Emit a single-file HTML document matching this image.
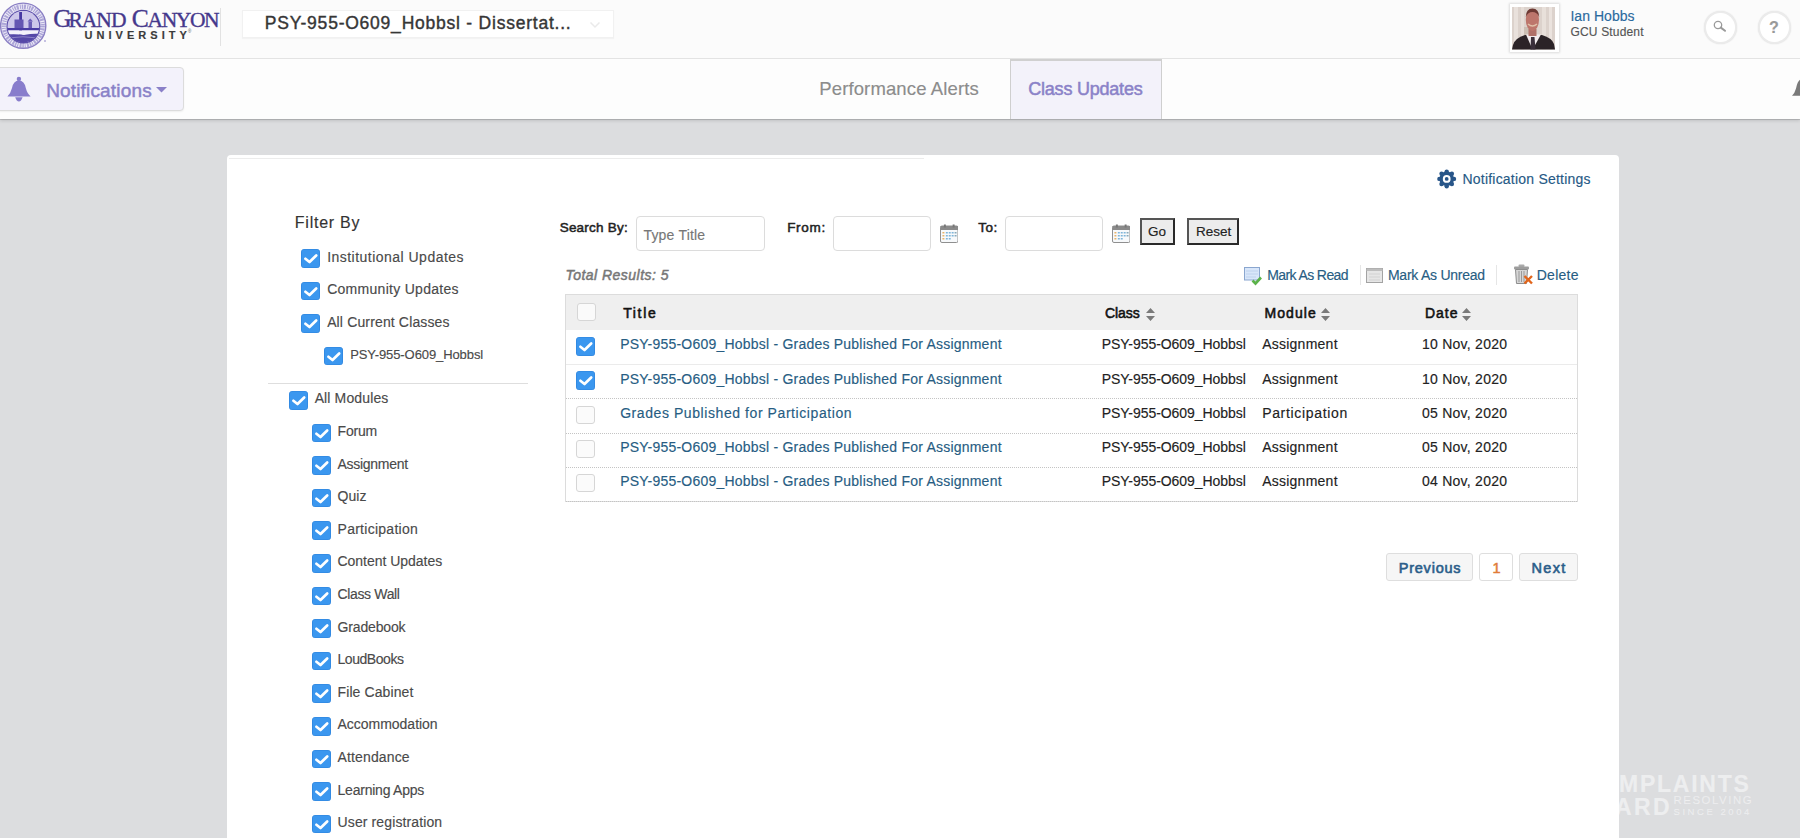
<!DOCTYPE html>
<html><head><meta charset="utf-8">
<style>
html,body{margin:0;padding:0;}
body{width:1800px;height:838px;overflow:hidden;position:relative;background:#dcdddf;font-family:"Liberation Sans",sans-serif;}
.a{position:absolute;box-sizing:border-box;}
.t{position:absolute;white-space:pre;font-family:"Liberation Sans",sans-serif;-webkit-text-stroke:0.15px currentColor;}
.cb{position:absolute;box-sizing:border-box;width:19px;height:18.7px;border-radius:3.5px;background:#3b97ef;box-shadow:inset 0 0 0 0.6px rgba(30,110,200,0.5);}
.cb svg{position:absolute;left:0;top:0;}
.ucb{position:absolute;box-sizing:border-box;width:19px;height:18px;border-radius:3px;background:#fbfbfb;border:1px solid #d6d6d6;}
.dot{position:absolute;left:566px;width:1011px;height:0;border-top:1px dotted #c4c4c4;}
.sort{position:absolute;width:9px;height:13px;}
</style></head><body>
<!-- HEADER -->
<div class="a" style="left:0;top:0;width:1800px;height:59px;background:#fbfbfb;border-bottom:1px solid #e4e4e4;"></div>
<!-- seal -->
<svg class="a" style="left:0;top:0" width="48" height="52" viewBox="0 0 48 52">
  <defs><clipPath id="ic"><circle cx="23.4" cy="26.6" r="15.8"/></clipPath></defs>
  <circle cx="23.2" cy="25.7" r="22.6" fill="#eeecf8" stroke="#8a7fc4" stroke-width="1.4"/>
  <circle cx="23.3" cy="26" r="19.3" fill="none" stroke="#8176c2" stroke-width="4.6" stroke-dasharray="1.5 0.8 2 1.2 1 0.9" opacity="0.6"/>
  <circle cx="23.4" cy="26.6" r="16.2" fill="#d8d3ef" stroke="#5d50ab" stroke-width="1.5"/>
  <g clip-path="url(#ic)">
    <rect x="5" y="11" width="40" height="17" fill="#cdc7ea"/>
    <rect x="19.2" y="12" width="2.8" height="23" fill="#4738a2"/>
    <rect x="14.5" y="19.5" width="9" height="9" fill="#6456b2"/>
    <rect x="28.5" y="21.5" width="3.5" height="7" fill="#6a5db6"/>
    <path d="M27.5 21.5 L33 21.5 L30.2 18.5Z" fill="#6a5db6"/>
    <rect x="5" y="28" width="40" height="2.4" fill="#4a3ca4"/>
    <path d="M5 30.4 H45 V34.5 Q35 33 24 35 Q14 33.5 5 34.8Z" fill="#f3f1fb"/>
    <path d="M5 34.8 Q14 33.5 24 35 Q35 33 45 34.5 V45 H5Z" fill="#5548a8"/>
    <path d="M8 38 Q23 35.5 38 38" stroke="#8d82c8" stroke-width="1" fill="none"/>
  </g>
  <circle cx="45" cy="41" r="0.7" fill="#6a5db6"/>
</svg>
<span class="t" style="left:53.3px;top:5.5px;font-family:'Liberation Serif';font-size:25.5px;line-height:25.5px;color:#45388c;-webkit-text-stroke:0.35px currentColor;">G</span>
<span class="t" style="left:68.5px;top:9.6px;font-family:'Liberation Serif';font-size:21.5px;line-height:21.5px;color:#45388c;-webkit-text-stroke:0.35px currentColor;letter-spacing:-1.0px;">RAND</span>
<span class="t" style="left:131.8px;top:5.5px;font-family:'Liberation Serif';font-size:25.5px;line-height:25.5px;color:#45388c;-webkit-text-stroke:0.35px currentColor;">C</span>
<span class="t" style="left:147.5px;top:9.6px;font-family:'Liberation Serif';font-size:21.5px;line-height:21.5px;color:#45388c;-webkit-text-stroke:0.35px currentColor;letter-spacing:-1.4px;">ANYON</span>
<span class="t" style="left:84.5px;top:30.2px;font-size:11px;line-height:11px;font-weight:bold;color:#3b3b3b;letter-spacing:4.05px;">UNIVERSITY</span>
<span class="t" style="left:188px;top:29.5px;font-size:4.5px;line-height:4.5px;color:#555;-webkit-text-stroke:0;">&#174;</span>
<div class="a" style="left:220px;top:8px;width:1px;height:38px;background:#e2e2e2;"></div>
<!-- dropdown -->
<div class="a" style="left:242px;top:10px;width:372px;height:28px;background:#fff;border:1px solid #f1f1f1;box-shadow:0 1px 1px rgba(0,0,0,0.03);"></div>
<svg class="a" style="left:589px;top:21px" width="12" height="8"><path d="M1.5 1.5 L6 6 L10.5 1.5" fill="none" stroke="#eaeaea" stroke-width="1.5"/></svg>
<!-- photo -->
<div class="a" style="left:1509.5px;top:4px;width:49px;height:48px;background:#fff;box-shadow:0 0 2px 1px rgba(0,0,0,0.12);"></div>
<svg class="a" style="left:1512px;top:7.3px" width="43" height="42.5" viewBox="0 0 43 42.5">
  <rect width="43" height="42.5" fill="#dcd2cc"/>
  <rect x="2" width="4" height="42.5" fill="#e9e1dc"/><rect x="9" width="3" height="42.5" fill="#e6ddd7"/>
  <rect x="30" width="4" height="42.5" fill="#e8e0da"/><rect x="37" width="3" height="42.5" fill="#ebe3de"/>
  <rect x="12" y="20" width="6" height="14" fill="#cbbfb4"/>
  <path d="M0 42.5 L1 38 Q3 31 13 28 L30 28 Q40 31 42 37 L43 42.5 Z" fill="#2b2327"/>
  <path d="M14 27.5 L20.5 42.5 L29 27.5 Z" fill="#f2ecee"/>
  <path d="M19 30 L22.5 30 L23.5 42.5 L18.5 42.5 Z" fill="#3a2f3a"/>
  <rect x="16.5" y="22" width="8" height="7" fill="#b07068"/>
  <ellipse cx="20.4" cy="13" rx="6.6" ry="11" fill="#bd766c"/>
  <path d="M13.8 10 Q14 1.5 20.4 1.5 Q27 1.5 27.2 10 Q25 5 20.4 5 Q16 5 13.8 10Z" fill="#6e3a34"/>
  <path d="M16 17 Q20.4 21 25 17" stroke="#e0c0a8" stroke-width="1.4" fill="none"/>
</svg>
<!-- search / help -->
<div class="a" style="left:1703.5px;top:10.5px;width:33px;height:33px;border-radius:50%;border:2px solid #ebebeb;background:#fff;box-shadow:0 0 1.5px rgba(0,0,0,0.12);"></div>
<svg class="a" style="left:1712px;top:19px" width="16" height="15"><circle cx="6" cy="6" r="3.7" fill="none" stroke="#9a9a9a" stroke-width="1.3"/><path d="M8.8 8.6 L13 11.8" stroke="#9a9a9a" stroke-width="2" stroke-linecap="round"/></svg>
<div class="a" style="left:1758px;top:10.5px;width:33px;height:33px;border-radius:50%;border:2px solid #ebebeb;background:#fff;box-shadow:0 0 1.5px rgba(0,0,0,0.12);"></div>
<span class="t" style="left:1769px;top:20px;font-size:16px;line-height:16px;color:#999;font-weight:bold;">?</span>

<!-- NAV BAR -->
<div class="a" style="left:0;top:59px;width:1800px;height:60px;background:#fdfdfd;box-shadow:0 1px 0 rgba(0,0,0,0.13),0 2px 3px rgba(0,0,0,0.12);"></div>
<div class="a" style="left:-4px;top:67px;width:187.5px;height:43.5px;background:#f3f2fb;border:1px solid #dcdcdc;border-radius:4px;box-shadow:0 1px 2px rgba(0,0,0,0.06);"></div>
<svg class="a" style="left:7px;top:75.5px" width="24" height="26" viewBox="0 0 24 26">
  <circle cx="11.9" cy="2.9" r="2.2" fill="#887dcc"/>
  <path d="M0.4 20.4 Q3.6 17.6 5 12 Q6.4 4.9 11.9 4.6 Q17.4 4.9 18.8 12 Q20.2 17.6 23.6 20.4 Z" fill="#887dcc"/>
  <path d="M8.2 21.2 L15.6 21.2 Q14.2 25.4 11.9 25.4 Q9.6 25.4 8.2 21.2 Z" fill="#887dcc"/>
</svg>
<svg class="a" style="left:155.5px;top:86.5px" width="11" height="6"><path d="M0 0 L11 0 L5.5 5.5 Z" fill="#8a80c8"/></svg>
<!-- class updates tab -->
<div class="a" style="left:1010px;top:59px;width:151.5px;height:60px;background:#f3f2fa;border-left:1px solid #cfcfcf;border-right:1px solid #cfcfcf;border-top:2px solid #d0d0d0;"></div>
<svg class="a" style="left:1790px;top:76px" width="10" height="21"><path d="M2 19.8 Q4.6 17.5 6 12.5 Q7.4 5.5 10 3.8 V19.8Z" fill="#7a7a7a"/></svg>

<!-- CARD -->
<div class="a" style="left:227px;top:155px;width:1392px;height:700px;background:#fff;border-radius:4px;"></div>
<div class="a" style="left:229px;top:158px;width:695px;height:1px;background:#ececec;"></div>

<!-- sidebar checkboxes -->
<div class="cb" style="left:301.2px;top:249.1px"><svg width="19" height="18.7" viewBox="0 0 19 18.7"><path d="M4.4 9.8 L8.5 13 L15.2 6.5" fill="none" stroke="#fff" stroke-width="2.7" stroke-linecap="round" stroke-linejoin="round"/></svg></div>
<div class="cb" style="left:301.2px;top:281.8px"><svg width="19" height="18.7" viewBox="0 0 19 18.7"><path d="M4.4 9.8 L8.5 13 L15.2 6.5" fill="none" stroke="#fff" stroke-width="2.7" stroke-linecap="round" stroke-linejoin="round"/></svg></div>
<div class="cb" style="left:301.2px;top:314.3px"><svg width="19" height="18.7" viewBox="0 0 19 18.7"><path d="M4.4 9.8 L8.5 13 L15.2 6.5" fill="none" stroke="#fff" stroke-width="2.7" stroke-linecap="round" stroke-linejoin="round"/></svg></div>
<div class="cb" style="left:324.3px;top:346.8px"><svg width="19" height="18.7" viewBox="0 0 19 18.7"><path d="M4.4 9.8 L8.5 13 L15.2 6.5" fill="none" stroke="#fff" stroke-width="2.7" stroke-linecap="round" stroke-linejoin="round"/></svg></div>
<div class="cb" style="left:288.6px;top:391.2px"><svg width="19" height="18.7" viewBox="0 0 19 18.7"><path d="M4.4 9.8 L8.5 13 L15.2 6.5" fill="none" stroke="#fff" stroke-width="2.7" stroke-linecap="round" stroke-linejoin="round"/></svg></div>
<div class="cb" style="left:311.7px;top:423.6px"><svg width="19" height="18.7" viewBox="0 0 19 18.7"><path d="M4.4 9.8 L8.5 13 L15.2 6.5" fill="none" stroke="#fff" stroke-width="2.7" stroke-linecap="round" stroke-linejoin="round"/></svg></div>
<div class="cb" style="left:311.7px;top:456.2px"><svg width="19" height="18.7" viewBox="0 0 19 18.7"><path d="M4.4 9.8 L8.5 13 L15.2 6.5" fill="none" stroke="#fff" stroke-width="2.7" stroke-linecap="round" stroke-linejoin="round"/></svg></div>
<div class="cb" style="left:311.7px;top:488.8px"><svg width="19" height="18.7" viewBox="0 0 19 18.7"><path d="M4.4 9.8 L8.5 13 L15.2 6.5" fill="none" stroke="#fff" stroke-width="2.7" stroke-linecap="round" stroke-linejoin="round"/></svg></div>
<div class="cb" style="left:311.7px;top:521.4px"><svg width="19" height="18.7" viewBox="0 0 19 18.7"><path d="M4.4 9.8 L8.5 13 L15.2 6.5" fill="none" stroke="#fff" stroke-width="2.7" stroke-linecap="round" stroke-linejoin="round"/></svg></div>
<div class="cb" style="left:311.7px;top:554.0px"><svg width="19" height="18.7" viewBox="0 0 19 18.7"><path d="M4.4 9.8 L8.5 13 L15.2 6.5" fill="none" stroke="#fff" stroke-width="2.7" stroke-linecap="round" stroke-linejoin="round"/></svg></div>
<div class="cb" style="left:311.7px;top:586.6px"><svg width="19" height="18.7" viewBox="0 0 19 18.7"><path d="M4.4 9.8 L8.5 13 L15.2 6.5" fill="none" stroke="#fff" stroke-width="2.7" stroke-linecap="round" stroke-linejoin="round"/></svg></div>
<div class="cb" style="left:311.7px;top:619.2px"><svg width="19" height="18.7" viewBox="0 0 19 18.7"><path d="M4.4 9.8 L8.5 13 L15.2 6.5" fill="none" stroke="#fff" stroke-width="2.7" stroke-linecap="round" stroke-linejoin="round"/></svg></div>
<div class="cb" style="left:311.7px;top:651.8px"><svg width="19" height="18.7" viewBox="0 0 19 18.7"><path d="M4.4 9.8 L8.5 13 L15.2 6.5" fill="none" stroke="#fff" stroke-width="2.7" stroke-linecap="round" stroke-linejoin="round"/></svg></div>
<div class="cb" style="left:311.7px;top:684.4px"><svg width="19" height="18.7" viewBox="0 0 19 18.7"><path d="M4.4 9.8 L8.5 13 L15.2 6.5" fill="none" stroke="#fff" stroke-width="2.7" stroke-linecap="round" stroke-linejoin="round"/></svg></div>
<div class="cb" style="left:311.7px;top:717.0px"><svg width="19" height="18.7" viewBox="0 0 19 18.7"><path d="M4.4 9.8 L8.5 13 L15.2 6.5" fill="none" stroke="#fff" stroke-width="2.7" stroke-linecap="round" stroke-linejoin="round"/></svg></div>
<div class="cb" style="left:311.7px;top:749.6px"><svg width="19" height="18.7" viewBox="0 0 19 18.7"><path d="M4.4 9.8 L8.5 13 L15.2 6.5" fill="none" stroke="#fff" stroke-width="2.7" stroke-linecap="round" stroke-linejoin="round"/></svg></div>
<div class="cb" style="left:311.7px;top:782.2px"><svg width="19" height="18.7" viewBox="0 0 19 18.7"><path d="M4.4 9.8 L8.5 13 L15.2 6.5" fill="none" stroke="#fff" stroke-width="2.7" stroke-linecap="round" stroke-linejoin="round"/></svg></div>
<div class="cb" style="left:311.7px;top:814.8px"><svg width="19" height="18.7" viewBox="0 0 19 18.7"><path d="M4.4 9.8 L8.5 13 L15.2 6.5" fill="none" stroke="#fff" stroke-width="2.7" stroke-linecap="round" stroke-linejoin="round"/></svg></div>
<div class="a" style="left:268px;top:383px;width:260px;height:1px;background:#dedede;"></div>

<!-- inputs -->
<div class="a" style="left:636px;top:216px;width:129px;height:35px;border:1px solid #dcdcdc;border-radius:4px;background:#fff;"></div>
<div class="a" style="left:833px;top:216px;width:98px;height:35px;border:1px solid #dcdcdc;border-radius:4px;background:#fff;"></div>
<div class="a" style="left:1005px;top:216px;width:98px;height:35px;border:1px solid #dcdcdc;border-radius:4px;background:#fff;"></div>
<svg class="a" style="left:939.5px;top:223.5px" width="18.5" height="19" viewBox="0 0 19 19" preserveAspectRatio="none"><rect x="0.5" y="2" width="18" height="16.5" rx="1.5" fill="#f7f9fb" stroke="#8d8d8d"/><rect x="0.5" y="2" width="18" height="4" fill="#8a8a8a"/><rect x="4" y="0.5" width="2" height="3" fill="#777"/><rect x="13" y="0.5" width="2" height="3" fill="#777"/><g fill="#7fb5d9"><rect x="6" y="8" width="2" height="1.5"/><rect x="9" y="8" width="2" height="1.5"/><rect x="12" y="8" width="2" height="1.5"/><rect x="6" y="11" width="2" height="1.5"/><rect x="9" y="11" width="2" height="1.5"/><rect x="12" y="11" width="2" height="1.5"/><rect x="6" y="14" width="2" height="1.5"/><rect x="9" y="14" width="2" height="1.5"/></g><g fill="#e8b46a"><rect x="2.5" y="8" width="2" height="1.5"/><rect x="2.5" y="11" width="2" height="1.5"/><rect x="2.5" y="14" width="2" height="1.5"/></g><g fill="#8ab"><rect x="15" y="8" width="2" height="1.5"/><rect x="15" y="11" width="2" height="1.5"/></g></svg><svg class="a" style="left:1111.5px;top:223.5px" width="18.5" height="19" viewBox="0 0 19 19" preserveAspectRatio="none"><rect x="0.5" y="2" width="18" height="16.5" rx="1.5" fill="#f7f9fb" stroke="#8d8d8d"/><rect x="0.5" y="2" width="18" height="4" fill="#8a8a8a"/><rect x="4" y="0.5" width="2" height="3" fill="#777"/><rect x="13" y="0.5" width="2" height="3" fill="#777"/><g fill="#7fb5d9"><rect x="6" y="8" width="2" height="1.5"/><rect x="9" y="8" width="2" height="1.5"/><rect x="12" y="8" width="2" height="1.5"/><rect x="6" y="11" width="2" height="1.5"/><rect x="9" y="11" width="2" height="1.5"/><rect x="12" y="11" width="2" height="1.5"/><rect x="6" y="14" width="2" height="1.5"/><rect x="9" y="14" width="2" height="1.5"/></g><g fill="#e8b46a"><rect x="2.5" y="8" width="2" height="1.5"/><rect x="2.5" y="11" width="2" height="1.5"/><rect x="2.5" y="14" width="2" height="1.5"/></g><g fill="#8ab"><rect x="15" y="8" width="2" height="1.5"/><rect x="15" y="11" width="2" height="1.5"/></g></svg>
<div class="a" style="left:1140px;top:218px;width:34.8px;height:27px;border:2px solid #2a2a2a;border-top-color:#555;border-left-color:#555;background:#ececec;"></div>
<div class="a" style="left:1187px;top:218px;width:51.8px;height:27px;border:2px solid #2a2a2a;border-top-color:#555;border-left-color:#555;background:#ececec;"></div>

<!-- gear -->
<svg class="a" style="left:1436px;top:168px" width="22" height="22" viewBox="0 0 22 22">
  <g fill="#285689"><circle cx="10.7" cy="10.9" r="7.3"/><circle cx="10.70" cy="18.20" r="2.2"/><circle cx="5.54" cy="16.06" r="2.2"/><circle cx="3.40" cy="10.90" r="2.2"/><circle cx="5.54" cy="5.74" r="2.2"/><circle cx="10.70" cy="3.60" r="2.2"/><circle cx="15.86" cy="5.74" r="2.2"/><circle cx="18.00" cy="10.90" r="2.2"/><circle cx="15.86" cy="16.06" r="2.2"/></g>
  <circle cx="10.7" cy="10.9" r="3.9" fill="#fff"/>
  <circle cx="10.7" cy="10.9" r="1.9" fill="#285689"/>
</svg>
<!-- mark read icon -->
<svg class="a" style="left:1243px;top:266px" width="20" height="20" viewBox="0 0 20 20">
  <rect x="1.5" y="1.5" width="15" height="12.5" fill="#d8e6fa" stroke="#8aa6cf" stroke-width="1"/>
  <path d="M3 5 H15 M3 8 H15 M3 11 H13" stroke="#b9cdea" stroke-width="0.8"/>
  <path d="M9.5 14.5 L12.5 17.5 L18 11.5" fill="none" stroke="#5bb24a" stroke-width="2.6"/>
</svg>
<div class="a" style="left:1360px;top:264.5px;width:1px;height:20px;background:#e6e6e6;"></div>
<svg class="a" style="left:1365.5px;top:267.5px" width="17" height="15" viewBox="0 0 17 15">
  <rect x="0.5" y="0.5" width="16" height="14" fill="#e6e6e6" stroke="#a3a3a3" stroke-width="1"/>
  <rect x="0.5" y="0.5" width="16" height="2.5" fill="#bdbdbd"/>
  <path d="M3 6 H14 M3 9 H14 M3 12 H14" stroke="#cdcdcd" stroke-width="0.8"/>
</svg>
<div class="a" style="left:1496px;top:265px;width:1px;height:20px;background:#e6e6e6;"></div>
<!-- trash -->
<svg class="a" style="left:1513px;top:263.5px" width="21" height="21" viewBox="0 0 21 21">
  <rect x="5.5" y="0.5" width="6" height="2.5" rx="1" fill="#aaa"/>
  <rect x="1" y="2.5" width="15" height="3" rx="1" fill="#9d9d9d"/>
  <path d="M2.5 5.5 L14.5 5.5 L13.5 19.5 L3.5 19.5 Z" fill="#d6d6d6" stroke="#8d8d8d" stroke-width="1"/>
  <path d="M6 7 V18 M8.5 7 V18 M11 7 V18" stroke="#999" stroke-width="1"/>
  <path d="M11.5 12 L19 19.5 M19 12 L11.5 19.5" stroke="#e1651b" stroke-width="2.4"/>
</svg>

<!-- TABLE -->
<div class="a" style="left:565px;top:294px;width:1013px;height:208px;border:1px solid #dcdcdc;background:#fff;"></div>
<div class="a" style="left:566px;top:295px;width:1011px;height:35px;background:#efefef;"></div>
<div class="ucb" style="left:577px;top:303px;background:#fafafa;"></div>
<div class="cb" style="left:576px;top:337.0px"><svg width="19" height="18.7" viewBox="0 0 19 18.7"><path d="M4.4 9.8 L8.5 13 L15.2 6.5" fill="none" stroke="#fff" stroke-width="2.7" stroke-linecap="round" stroke-linejoin="round"/></svg></div>
<div class="dot" style="top:364.0px;border-top:1px solid #ebebeb;"></div>
<div class="cb" style="left:576px;top:371.2px"><svg width="19" height="18.7" viewBox="0 0 19 18.7"><path d="M4.4 9.8 L8.5 13 L15.2 6.5" fill="none" stroke="#fff" stroke-width="2.7" stroke-linecap="round" stroke-linejoin="round"/></svg></div>
<div class="dot" style="top:398.2px;"></div>
<div class="ucb" style="left:576px;top:405.5px"></div>
<div class="dot" style="top:432.5px;"></div>
<div class="ucb" style="left:576px;top:439.8px"></div>
<div class="dot" style="top:466.8px;"></div>
<div class="ucb" style="left:576px;top:474.0px"></div>
<div class="dot" style="top:501.0px;"></div>
<svg class="sort" style="left:1145.5px;top:307.5px" viewBox="0 0 9 13"><path d="M4.5 0 L9 5 L0 5Z M0 8 L9 8 L4.5 13Z" fill="#7a7a7a"/></svg>
<svg class="sort" style="left:1320.5px;top:307.5px" viewBox="0 0 9 13"><path d="M4.5 0 L9 5 L0 5Z M0 8 L9 8 L4.5 13Z" fill="#7a7a7a"/></svg>
<svg class="sort" style="left:1462px;top:307.5px" viewBox="0 0 9 13"><path d="M4.5 0 L9 5 L0 5Z M0 8 L9 8 L4.5 13Z" fill="#7a7a7a"/></svg>

<!-- PAGINATION -->
<div class="a" style="left:1386px;top:553px;width:87px;height:28px;border:1px solid #dedede;border-radius:3px;background:#f6f6f6;"></div>
<div class="a" style="left:1478.5px;top:553px;width:34.5px;height:28px;border:1px solid #dedede;border-radius:3px;background:#fff;"></div>
<div class="a" style="left:1518.5px;top:553px;width:59.5px;height:28px;border:1px solid #dedede;border-radius:3px;background:#f6f6f6;"></div>

<span class="t" style="left:264.80px;top:15.19px;font-size:17.5px;line-height:17.5px;color:#363636;letter-spacing:0.771px;-webkit-text-stroke:0.4px currentColor;">PSY-955-O609_Hobbsl - Dissertat...</span>
<span class="t" style="left:1570.44px;top:9.45px;font-size:14px;line-height:14px;color:#2a6a9e;letter-spacing:0.036px;">Ian Hobbs</span>
<span class="t" style="left:1570.52px;top:25.84px;font-size:12px;line-height:12px;color:#555;letter-spacing:0.158px;">GCU Student</span>
<span class="t" style="left:46.14px;top:80.62px;font-size:19px;line-height:19px;color:#8a82c8;letter-spacing:0.168px;-webkit-text-stroke:0.5px currentColor;">Notifications</span>
<span class="t" style="left:819.26px;top:80.14px;font-size:18.5px;line-height:18.5px;color:#8c8c8c;letter-spacing:0.127px;">Performance Alerts</span>
<span class="t" style="left:1028.28px;top:80.46px;font-size:18px;line-height:18px;color:#8a82c8;letter-spacing:-0.219px;-webkit-text-stroke:0.5px currentColor;">Class Updates</span>
<span class="t" style="left:294.86px;top:215.36px;font-size:16px;line-height:16px;color:#333;letter-spacing:0.739px;">Filter By</span>
<span class="t" style="left:327.14px;top:249.85px;font-size:14px;line-height:14px;color:#4a4a4a;letter-spacing:0.478px;">Institutional Updates</span>
<span class="t" style="left:327.14px;top:282.45px;font-size:14px;line-height:14px;color:#4a4a4a;letter-spacing:0.287px;">Community Updates</span>
<span class="t" style="left:327.14px;top:314.95px;font-size:14px;line-height:14px;color:#4a4a4a;letter-spacing:0.144px;">All Current Classes</span>
<span class="t" style="left:350.18px;top:347.80px;font-size:13px;line-height:13px;color:#4a4a4a;letter-spacing:-0.091px;">PSY-955-O609_Hobbsl</span>
<span class="t" style="left:314.64px;top:390.95px;font-size:14px;line-height:14px;color:#4a4a4a;letter-spacing:0.135px;">All Modules</span>
<span class="t" style="left:337.54px;top:423.95px;font-size:14px;line-height:14px;color:#4a4a4a;letter-spacing:-0.183px;">Forum</span>
<span class="t" style="left:337.54px;top:456.55px;font-size:14px;line-height:14px;color:#4a4a4a;letter-spacing:-0.293px;">Assignment</span>
<span class="t" style="left:337.54px;top:489.15px;font-size:14px;line-height:14px;color:#4a4a4a;letter-spacing:0.074px;">Quiz</span>
<span class="t" style="left:337.54px;top:521.75px;font-size:14px;line-height:14px;color:#4a4a4a;letter-spacing:0.264px;">Participation</span>
<span class="t" style="left:337.54px;top:554.35px;font-size:14px;line-height:14px;color:#4a4a4a;letter-spacing:-0.033px;">Content Updates</span>
<span class="t" style="left:337.54px;top:586.95px;font-size:14px;line-height:14px;color:#4a4a4a;letter-spacing:-0.354px;">Class Wall</span>
<span class="t" style="left:337.54px;top:619.55px;font-size:14px;line-height:14px;color:#4a4a4a;letter-spacing:-0.158px;">Gradebook</span>
<span class="t" style="left:337.54px;top:652.15px;font-size:14px;line-height:14px;color:#4a4a4a;letter-spacing:-0.455px;">LoudBooks</span>
<span class="t" style="left:337.54px;top:684.75px;font-size:14px;line-height:14px;color:#4a4a4a;letter-spacing:0.102px;">File Cabinet</span>
<span class="t" style="left:337.54px;top:717.35px;font-size:14px;line-height:14px;color:#4a4a4a;letter-spacing:-0.023px;">Accommodation</span>
<span class="t" style="left:337.54px;top:749.95px;font-size:14px;line-height:14px;color:#4a4a4a;letter-spacing:0.131px;">Attendance</span>
<span class="t" style="left:337.54px;top:782.55px;font-size:14px;line-height:14px;color:#4a4a4a;letter-spacing:-0.226px;">Learning Apps</span>
<span class="t" style="left:337.54px;top:815.15px;font-size:14px;line-height:14px;color:#4a4a4a;letter-spacing:0.120px;">User registration</span>
<span class="t" style="left:559.66px;top:221.07px;font-size:13.5px;line-height:13.5px;color:#222;letter-spacing:0.228px;-webkit-text-stroke:0.5px currentColor;">Search By:</span>
<span class="t" style="left:643.44px;top:227.95px;font-size:14px;line-height:14px;color:#777;letter-spacing:0.200px;">Type Title</span>
<span class="t" style="left:787.16px;top:221.07px;font-size:13.5px;line-height:13.5px;color:#222;letter-spacing:0.707px;-webkit-text-stroke:0.5px currentColor;">From:</span>
<span class="t" style="left:978.16px;top:221.07px;font-size:13.5px;line-height:13.5px;color:#222;letter-spacing:0.532px;-webkit-text-stroke:0.5px currentColor;">To:</span>
<span class="t" style="left:1147.96px;top:225.07px;font-size:13.5px;line-height:13.5px;color:#222;">Go</span>
<span class="t" style="left:1195.96px;top:225.07px;font-size:13.5px;line-height:13.5px;color:#222;">Reset</span>
<span class="t" style="left:1462.44px;top:171.65px;font-size:14px;line-height:14px;color:#265a86;letter-spacing:0.219px;">Notification Settings</span>
<span class="t" style="left:565.44px;top:267.95px;font-size:14px;line-height:14px;color:#777;font-style:italic;letter-spacing:0.476px;-webkit-text-stroke:0.5px currentColor;">Total Results: 5</span>
<span class="t" style="left:1267.24px;top:268.15px;font-size:14px;line-height:14px;color:#275d83;letter-spacing:-0.602px;">Mark As Read</span>
<span class="t" style="left:1387.94px;top:268.15px;font-size:14px;line-height:14px;color:#275d83;letter-spacing:-0.250px;">Mark As Unread</span>
<span class="t" style="left:1536.74px;top:267.95px;font-size:14px;line-height:14px;color:#275d83;letter-spacing:0.270px;">Delete</span>
<span class="t" style="left:623.14px;top:305.75px;font-size:14px;line-height:14px;color:#111;letter-spacing:1.671px;-webkit-text-stroke:0.55px currentColor;">Title</span>
<span class="t" style="left:1105.04px;top:305.55px;font-size:14px;line-height:14px;color:#111;letter-spacing:-0.099px;-webkit-text-stroke:0.55px currentColor;">Class</span>
<span class="t" style="left:1264.44px;top:305.55px;font-size:14px;line-height:14px;color:#111;letter-spacing:1.080px;-webkit-text-stroke:0.55px currentColor;">Module</span>
<span class="t" style="left:1424.94px;top:305.55px;font-size:14px;line-height:14px;color:#111;letter-spacing:1.014px;-webkit-text-stroke:0.55px currentColor;">Date</span>
<span class="t" style="left:620.14px;top:337.35px;font-size:14px;line-height:14px;color:#275d83;letter-spacing:0.221px;">PSY-955-O609_Hobbsl - Grades Published For Assignment</span>
<span class="t" style="left:1101.74px;top:337.35px;font-size:14px;line-height:14px;color:#222;letter-spacing:-0.051px;">PSY-955-O609_Hobbsl</span>
<span class="t" style="left:1262.14px;top:337.35px;font-size:14px;line-height:14px;color:#222;letter-spacing:0.252px;">Assignment</span>
<span class="t" style="left:1421.94px;top:337.35px;font-size:14px;line-height:14px;color:#222;letter-spacing:0.261px;">10 Nov, 2020</span>
<span class="t" style="left:620.14px;top:371.60px;font-size:14px;line-height:14px;color:#275d83;letter-spacing:0.221px;">PSY-955-O609_Hobbsl - Grades Published For Assignment</span>
<span class="t" style="left:1101.74px;top:371.60px;font-size:14px;line-height:14px;color:#222;letter-spacing:-0.051px;">PSY-955-O609_Hobbsl</span>
<span class="t" style="left:1262.14px;top:371.60px;font-size:14px;line-height:14px;color:#222;letter-spacing:0.252px;">Assignment</span>
<span class="t" style="left:1421.94px;top:371.60px;font-size:14px;line-height:14px;color:#222;letter-spacing:0.261px;">10 Nov, 2020</span>
<span class="t" style="left:620.14px;top:405.85px;font-size:14px;line-height:14px;color:#275d83;letter-spacing:0.575px;">Grades Published for Participation</span>
<span class="t" style="left:1101.74px;top:405.85px;font-size:14px;line-height:14px;color:#222;letter-spacing:-0.051px;">PSY-955-O609_Hobbsl</span>
<span class="t" style="left:1262.14px;top:405.85px;font-size:14px;line-height:14px;color:#222;letter-spacing:0.673px;">Participation</span>
<span class="t" style="left:1421.94px;top:405.85px;font-size:14px;line-height:14px;color:#222;letter-spacing:0.261px;">05 Nov, 2020</span>
<span class="t" style="left:620.14px;top:440.10px;font-size:14px;line-height:14px;color:#275d83;letter-spacing:0.221px;">PSY-955-O609_Hobbsl - Grades Published For Assignment</span>
<span class="t" style="left:1101.74px;top:440.10px;font-size:14px;line-height:14px;color:#222;letter-spacing:-0.051px;">PSY-955-O609_Hobbsl</span>
<span class="t" style="left:1262.14px;top:440.10px;font-size:14px;line-height:14px;color:#222;letter-spacing:0.252px;">Assignment</span>
<span class="t" style="left:1421.94px;top:440.10px;font-size:14px;line-height:14px;color:#222;letter-spacing:0.261px;">05 Nov, 2020</span>
<span class="t" style="left:620.14px;top:474.35px;font-size:14px;line-height:14px;color:#275d83;letter-spacing:0.221px;">PSY-955-O609_Hobbsl - Grades Published For Assignment</span>
<span class="t" style="left:1101.74px;top:474.35px;font-size:14px;line-height:14px;color:#222;letter-spacing:-0.051px;">PSY-955-O609_Hobbsl</span>
<span class="t" style="left:1262.14px;top:474.35px;font-size:14px;line-height:14px;color:#222;letter-spacing:0.252px;">Assignment</span>
<span class="t" style="left:1421.94px;top:474.35px;font-size:14px;line-height:14px;color:#222;letter-spacing:0.261px;">04 Nov, 2020</span>
<span class="t" style="left:1398.72px;top:560.93px;font-size:14.5px;line-height:14.5px;color:#2b5e8a;letter-spacing:0.777px;-webkit-text-stroke:0.6px currentColor;">Previous</span>
<span class="t" style="left:1492.42px;top:560.93px;font-size:14.5px;line-height:14.5px;color:#e07b39;-webkit-text-stroke:0.5px currentColor;">1</span>
<span class="t" style="left:1531.42px;top:560.93px;font-size:14.5px;line-height:14.5px;color:#2b5e8a;letter-spacing:1.377px;-webkit-text-stroke:0.6px currentColor;">Next</span>

<!-- watermark -->
<div class="a" style="left:1619px;top:760px;width:181px;height:78px;overflow:hidden;">
<span class="t" style="left:0px;top:12.6px;font-size:23px;line-height:23px;font-weight:bold;color:rgba(255,255,255,0.5);letter-spacing:1.75px;">MPLAINTS</span>
<span class="t" style="left:-4px;top:35.5px;font-size:23px;line-height:23px;font-weight:bold;color:rgba(255,255,255,0.5);letter-spacing:2.4px;">ARD</span>
<span class="t" style="left:54.5px;top:35.35px;font-size:11.4px;line-height:11.4px;color:rgba(255,255,255,0.45);letter-spacing:1.55px;">RESOLVING</span>
<span class="t" style="left:54.5px;top:46.96px;font-size:9.5px;line-height:9.5px;color:rgba(255,255,255,0.45);letter-spacing:2.55px;">SINCE 2004</span>
</div>
</body></html>
